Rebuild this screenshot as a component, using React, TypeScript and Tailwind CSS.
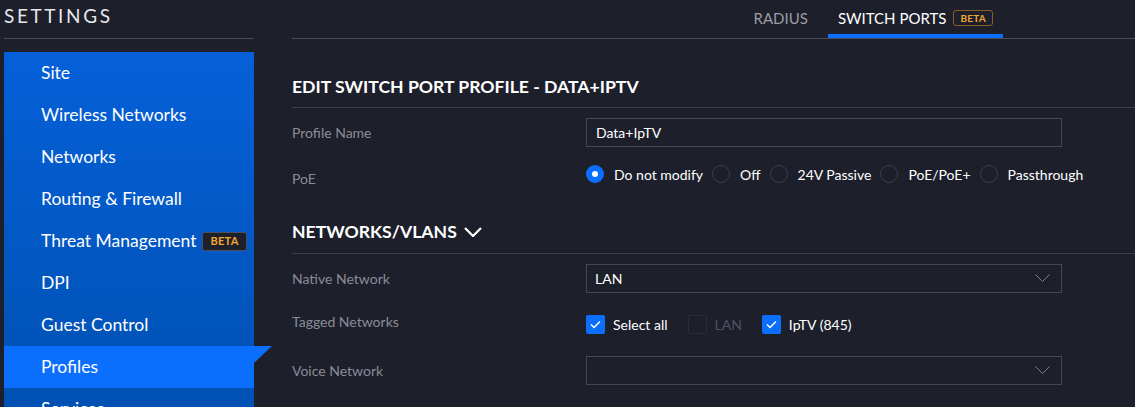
const NAV = [
  'Site',
  'Wireless Networks',
  'Networks',
  'Routing & Firewall',
  'Threat Management',
  'DPI',
  'Guest Control',
  'Profiles',
  'Services',
];

const POE = ['Do not modify', 'Off', '24V Passive', 'PoE/PoE+', 'Passthrough'];

function Beta({ outline }: { outline?: boolean }) {
  return (
    <span
      className={
        outline
          ? 'ml-[7px] inline-flex h-[16px] items-center rounded-[3px] border border-[#8a5f24] px-[6px] text-[10px] font-bold tracking-wide text-[#f0a630]'
          : 'ml-[6px] inline-flex h-[19px] items-center rounded-[3px] border border-[#4d4f5c] bg-[#1d1f2b] px-[7px] text-[11px] font-bold tracking-wide text-[#f0a630]'
      }
    >
      BETA
    </span>
  );
}

function Radio({ checked }: { checked?: boolean }) {
  return checked ? (
    <span className="flex h-[18px] w-[18px] shrink-0 items-center justify-center rounded-full bg-[#0b6efd]">
      <span className="h-[6px] w-[6px] rounded-full bg-white" />
    </span>
  ) : (
    <span className="h-[18px] w-[18px] shrink-0 rounded-full border border-[#3b3e4b]" />
  );
}

function Check({ checked }: { checked?: boolean }) {
  return checked ? (
    <span className="flex h-[19px] w-[19px] shrink-0 items-center justify-center rounded-[2px] bg-[#0b6efd]">
      <svg width="11" height="9" viewBox="0 0 11 9" fill="none">
        <path d="M1 4.5 L4 7.5 L10 1.5" stroke="white" strokeWidth="1.5" />
      </svg>
    </span>
  ) : (
    <span className="h-[19px] w-[19px] shrink-0 rounded-[2px] border border-[#2a2c38]" />
  );
}

function Select({ value }: { value?: string }) {
  return (
    <div className="flex h-[29px] w-[476px] items-center justify-between border border-[#434656] pl-[8px] pr-[11px] text-[14px] text-white">
      <span>{value}</span>
      <svg width="15" height="8" viewBox="0 0 15 8" fill="none">
        <path d="M0.5 0.5 L7.5 7.5 L14.5 0.5" stroke="#7d808c" strokeWidth="1" />
      </svg>
    </div>
  );
}

function Row({ label, children, labelClass = '' }: { label: string; children: React.ReactNode; labelClass?: string }) {
  return (
    <div className="flex h-[28px] items-center">
      <div className={`w-[294px] text-[14px] text-[#8a8c98] ${labelClass}`}>{label}</div>
      {children}
    </div>
  );
}

export default function App() {
  return (
    <div
      className="flex h-[407px] w-[1135px] overflow-hidden bg-[#1d1f2b] text-white"
      style={{ fontFamily: 'Lato, "Open Sans", sans-serif' }}
    >
      {/* Sidebar */}
      <div className="ml-[4px] w-[250px] shrink-0">
        <div className="h-[39px] border-b border-[#4a4c58]">
          <div className="pt-[4px] text-[19px] leading-[24px] tracking-[2.6px] text-[#e6e7ea]">SETTINGS</div>
        </div>
        <div className="mt-[13px] bg-gradient-to-b from-[#0560d9] to-[#0050b0]">
          {NAV.map(item => {
            const active = item === 'Profiles';
            return (
              <div
                key={item}
                className={`relative flex h-[42px] items-center pl-[37px] text-[17.5px] ${active ? 'bg-[#0b6efd]' : ''}`}
              >
                {item}
                {item === 'Threat Management' && <Beta />}
                {active && (
                  <span className="absolute left-[250px] top-0 h-0 w-0 border-r-[18px] border-t-[17px] border-r-transparent border-t-[#0b6efd]" />
                )}
              </div>
            );
          })}
        </div>
      </div>

      {/* Main */}
      <div className="ml-[38px] flex-1">
        <div className="flex h-[39px] justify-end border-b border-[#4a4c58] pr-[132px]">
          <div className="flex items-center px-[10px] pb-[2px] text-[15px] text-[#9a9ca6]">RADIUS</div>
          <div className="ml-[10px] flex items-center border-b-[4px] border-[#0b6efd] px-[10px] pt-[2px] text-[15px] text-white">
            SWITCH PORTS
            <Beta outline />
          </div>
        </div>

        <div className="border-b border-[#3c3e4a] pb-[10px] pt-[38px] text-[17.6px] font-bold leading-[20px]">
          EDIT SWITCH PORT PROFILE - DATA+IPTV
        </div>

        <div className="mt-[10px] flex flex-col gap-[14px]">
          <Row label="Profile Name">
            <div className="flex h-[29px] w-[476px] items-center border border-[#434656] pl-[9px] text-[14px]">Data+IpTV</div>
          </Row>
          <Row label="PoE" labelClass="pt-[9px]">
            <div className="flex items-center text-[14px]">
              {POE.map((p, i) => (
                <div key={p} className="mr-[9px] flex items-center gap-[10px]">
                  <Radio checked={i === 0} />
                  <span>{p}</span>
                </div>
              ))}
            </div>
          </Row>
        </div>

        <div className="flex items-center border-b border-[#3c3e4a] pb-[11px] pt-[34px] text-[17.6px] font-bold leading-[20px]">
          NETWORKS/VLANS
          <svg className="ml-[7px]" width="18" height="10" viewBox="0 0 18 10" fill="none">
            <path d="M1 1 L9 9 L17 1" stroke="white" strokeWidth="2.2" />
          </svg>
        </div>

        <div className="mt-[10px] flex flex-col gap-[18px]">
          <Row label="Native Network">
            <Select value="LAN" />
          </Row>
          <Row label="Tagged Networks" labelClass="pb-[6px]">
            <div className="flex items-center text-[14px]">
              <Check checked />
              <span className="ml-[8px]">Select all</span>
              <span className="ml-[20px]" />
              <Check />
              <span className="ml-[8px] text-[#4f5260]">LAN</span>
              <span className="ml-[20px]" />
              <Check checked />
              <span className="ml-[8px]">IpTV (845)</span>
            </div>
          </Row>
          <Row label="Voice Network">
            <Select />
          </Row>
        </div>
      </div>
    </div>
  );
}
